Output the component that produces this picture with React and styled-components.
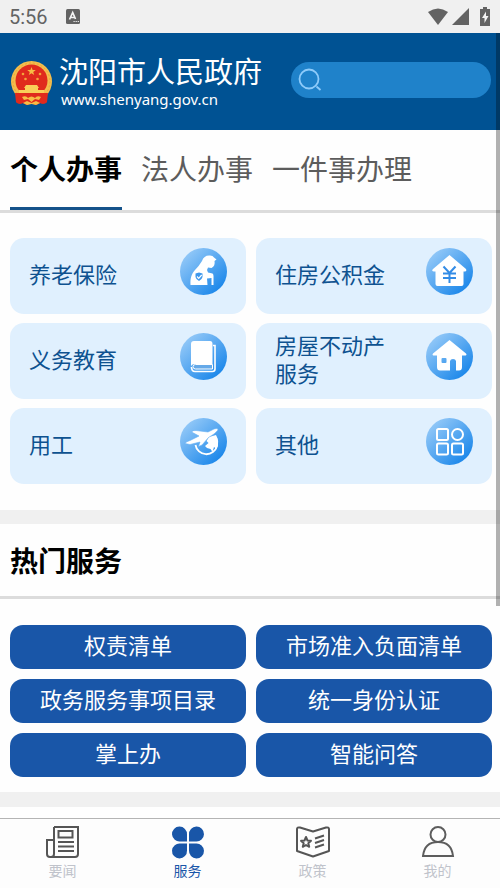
import React from "react";
import styled, { createGlobalStyle } from "styled-components";

const GlobalStyle = createGlobalStyle`
  *, *::before, *::after { box-sizing: border-box; }
  body {
    margin: 0;
    background: #fefefe;
    color: #000;
    font-family: Roboto, "Noto Sans CJK SC", sans-serif;
  }
  button, input { font: inherit; }
  button { border: 0; padding: 0; background: none; cursor: pointer; }
  a { text-decoration: none; color: inherit; }
  svg { display: block; flex: none; }
`;

const Page = styled.div`
  position: relative;
  display: flex;
  flex-direction: column;
  min-height: 100vh;
`;

const StatusBar = styled.div`
  display: flex;
  align-items: center;
  gap: 18px;
  height: 33px;
  padding: 0 9px;
  background: #f0f0f0;
  color: #636363;
  font-size: 20px;
  line-height: 34px;
`;

const StatusIcons = styled.div`
  display: flex;
  align-items: center;
  gap: 4px;
  margin-left: auto;
`;

const Header = styled.header`
  display: flex;
  align-items: center;
  justify-content: space-between;
  gap: 20px;
  height: 97px;
  padding: 0 9px 4px 10px;
  background: #005293;
`;

const Brand = styled.a`
  display: flex;
  align-items: center;
  gap: 6px;
  padding-top: 6px;
  color: #fff;
  white-space: nowrap;
`;

const BrandText = styled.span`
  display: flex;
  flex-direction: column;
`;

const BrandName = styled.span`
  font-size: 29px;
  line-height: 32px;
`;

const BrandUrl = styled.span`
  padding-left: 2px;
  font-family: "Noto Sans", sans-serif;
  font-size: 15px;
  line-height: 20px;
`;

const SearchBox = styled.label`
  display: flex;
  align-items: center;
  flex: 0 1 200px;
  min-width: 0;
  height: 36px;
  padding: 0 14px 0 7px;
  border-radius: 18px;
  background: #1f82ca;
`;

const SearchInput = styled.input`
  flex: 1;
  min-width: 0;
  margin-left: 8px;
  border: 0;
  outline: 0;
  background: transparent;
  color: #fff;
  font-size: 16px;
`;

const ScrollThumb = styled.div`
  position: absolute;
  top: 33px;
  right: 0;
  width: 4px;
  height: 573px;
  background: rgba(0, 0, 0, 0.3);
`;

const Main = styled.main`
  flex: 1;
`;

const TabList = styled.div`
  display: flex;
  gap: 19px;
  height: 83px;
  padding: 0 10px;
  border-bottom: 3px solid #dcdcdc;
`;

const Tab = styled.button`
  height: 80px;
  border-bottom: 3px solid ${(p) => (p.$active ? "#14528a" : "transparent")};
  color: ${(p) => (p.$active ? "#000" : "#5c5c5c")};
  font-size: 28px;
  font-weight: ${(p) => (p.$active ? 700 : 400)};
  padding-top: 4px;
  line-height: 72px;
  white-space: nowrap;
`;

const CardGrid = styled.div`
  display: grid;
  grid-template-columns: 1fr 1fr;
  gap: 9px 10px;
  padding: 25px 8px 26px 10px;
`;

const Card = styled.a`
  display: flex;
  align-items: center;
  justify-content: space-between;
  gap: 24px;
  min-height: 76px;
  padding: 10px 19px;
  border-radius: 14px;
  background: #e0f0fe;
  color: #0e5290;
  font-size: 22px;
  line-height: 28px;

  svg { align-self: flex-start; }
`;

const Divider = styled.div`
  height: ${(p) => p.$height || 14}px;
  background: #f0f0f0;
`;

const SectionTitle = styled.h2`
  margin: 0;
  padding: 0 10px;
  height: 75px;
  border-bottom: 3px solid #dcdcdc;
  font-size: 28px;
  font-weight: 700;
  line-height: 78px;
`;

const ServiceGrid = styled.div`
  display: grid;
  grid-template-columns: 1fr 1fr;
  gap: 10px;
  padding: 26px 8px 15px 10px;
`;

const ServiceButton = styled.button`
  min-height: 44px;
  border-radius: 13px;
  background: #1956a8;
  color: #fff;
  font-size: 22px;
  line-height: 44px;
`;

const NavBar = styled.nav`
  display: grid;
  grid-template-columns: repeat(4, 1fr);
  height: 70px;
  border-top: 1px solid #b4b4b4;
  background: #fdfdfd;
`;

const NavItem = styled.a`
  display: flex;
  flex-direction: column;
  align-items: center;
  padding-top: 6px;
  color: ${(p) => (p.$active ? "#1956a8" : "#c0c3cb")};
  font-size: 14px;
  line-height: 24px;
`;

function Emblem() {
  return (
    <svg width="43" height="46" viewBox="0 0 43 46" aria-hidden="true">
      <path d="M6 33 L6 42 Q8 45 13 43 L17 45 L21.500 43 L26 45 L30 43 Q35 45 37 42 L37 33Z" fill="#dd2a1d" />
      <circle cx="21.500" cy="21.500" r="20.500" fill="#f4bd4c" />
      <circle cx="21.500" cy="21.500" r="18.500" fill="none" stroke="#e9a53d" strokeWidth="1" strokeDasharray="2 2" />
      <circle cx="21.500" cy="20.500" r="16" fill="#e02a1d" />
      <path d="M21.500 7l1.100 3h3.200l-2.600 2 1 3-2.700-1.800-2.700 1.800 1-3-2.600-2h3.200z" fill="#f7bd45" />
      <g fill="#f2a53a">
        <circle cx="13" cy="14" r="1.300" /><circle cx="30" cy="14" r="1.300" />
        <circle cx="15.500" cy="19" r="1.300" /><circle cx="27.500" cy="19" r="1.300" />
      </g>
      <path d="M16 25h11l2 3H14zM15 28h13v2h6v3H9v-3h6z" fill="#f9cf59" />
      <path d="M5 33h33l-1 9q-3 3-7 1l-4 2-4.500-2-4.500 2-4-2q-4 2-7-1z" fill="#e02a1d" />
      <path d="M12 37q4-2 6 1 3.500-3 7 0 2-3 6-1l-2 3-4-1-3.500 3-3.500-3-4 1z" fill="#f6bd46" />
      <path d="M13 43l4-2 4.500 2 4.500-2 4 2-4 2-4.500-1-4.500 1z" fill="#f6bd46" />
    </svg>
  );
}

function Disc({ id, children }) {
  return (
    <svg width="47" height="47" viewBox="0 0 47 47" aria-hidden="true">
      <defs>
        <linearGradient id={id} x1="0.1" y1="0.1" x2="0.85" y2="0.9">
          <stop offset="0" stopColor="#96caf8" />
          <stop offset="1" stopColor="#1b87ea" />
        </linearGradient>
      </defs>
      <circle cx="23.500" cy="23.500" r="23.500" fill={`url(#${id})`} />
      {children}
    </svg>
  );
}

const ElderIcon = () => (
  <Disc id="disc-elder">
    <path d="M22 13Q24 7 30 7.500Q33 7.500 34 9.500L36.500 11.500L34.500 13Q35.500 18 31.500 20L28 19.500L27 22L28 24.500L32.500 25.500Q33.500 26 33.500 28V37H31.500V30L27 30.500L27.500 37H10.500C10 30 11.500 26 15 22Q19 18 22 13Z" fill="#fff" />
    <path d="M15.500 25.500l3.500-1 3.500 1v3.500q-.5 2.500-3.500 4-3-1.500-3.500-4z" fill="#3e98ed" />
    <path d="M17 28.500l1.700 1.800 3-3.300" fill="none" stroke="#fff" strokeWidth="1.200" />
  </Disc>
);

const FundIcon = () => (
  <Disc id="disc-fund">
    <path d="M23.500 7L40 21Q41 23 39 23.500H37.500V36Q37.500 38 35.500 38H11.500Q9.500 38 9.500 36V23.500H8Q5 23 7 21Z" fill="#fff" />
    <path d="M17.500 18.500l6 6.500 6-6.500M17 25.500h13M17 30h13M23.500 25v10" fill="none" stroke="#338ce6" strokeWidth="2" />
  </Disc>
);

const BookIcon = () => (
  <Disc id="disc-book">
    <path d="M11 11Q11 8 14 8H30Q32.500 8 32.500 11V31H15Q12 31 11 33Z" fill="#fff" />
    <path d="M33 12.500H35V36Q35 38.500 32.500 38.500H15Q11.500 38.500 11.500 34" fill="none" stroke="#fff" strokeWidth="1.600" />
    <path d="M32.500 31.500H15.500Q13 31.500 13 33.700T15.500 36H32.500Z" fill="#65a9e8" stroke="#fff" strokeWidth="1" />
  </Disc>
);

const HomeIcon = () => (
  <Disc id="disc-home">
    <path fillRule="evenodd" d="M23.500 7L40 20.500Q41.500 22.500 38.500 22.500H36V34Q36 37.500 33 37.500H30V28Q29.500 26 27 26T24 28V37.500H14Q11 37.500 11 34V22.500H8.500Q5.500 22.500 7 20.500ZM16.500 25Q15.500 25 15.500 26V29Q15.500 30 16.500 30H19.500Q20.500 30 20.500 29V26Q20.500 25 19.500 25Z" fill="#fff" />
  </Disc>
);

const WorkIcon = () => (
  <Disc id="disc-work">
    <path d="M15.500 27A11 11 0 0 0 37 28Q38 23 36 19" fill="none" stroke="#fff" strokeWidth="1.800" />
    <path d="M29 19L36 17Q39.500 24 36.500 31L34 29L32.500 34L30.500 31L27 30L25 28L28.500 25L26.500 23Z" fill="#fff" />
    <path d="M5 25.500Q6 23.500 10 22.500L19 18L11.500 14Q13 12 16 12.500L28 14L34 11Q39 9.500 37.500 12.500Q35 16 28.500 19.500L22 27L18.500 28.500L20 24L10 26.500Z" fill="#fff" stroke="#67b0f4" strokeWidth="0.6" />
  </Disc>
);

const OtherIcon = () => (
  <Disc id="disc-other">
    <g fill="none" stroke="#fff" strokeWidth="2">
      <rect x="11" y="11" width="11" height="11" rx="1.500" />
      <circle cx="31.500" cy="16.500" r="5.500" />
      <rect x="11" y="25.500" width="11" height="11" rx="1.500" />
      <rect x="26" y="25.500" width="11" height="11" rx="1.500" />
    </g>
  </Disc>
);

const NewsIcon = () => (
  <svg width="34" height="34" viewBox="0 0 34 34" fill="none" stroke="#555" strokeWidth="2" aria-hidden="true">
    <path d="M8 2H32V29Q32 32 29 32H4Q1 32 1 29V15H8M8 2V29Q8 32 5 32" />
    <rect x="12.500" y="6" width="14" height="6.500" />
    <path d="M12 17H28M12 21.500H28M12 26H28" />
  </svg>
);

const ServiceIcon = () => (
  <svg width="34" height="34" viewBox="0 0 34 34" fill="#1956a8" aria-hidden="true">
    <path d="M16 16.500H9.500A7.500 7.500 0 1 1 16 9.500ZM18 16.500V9.500A7.500 7.500 0 1 1 25 16.500ZM16 18.500V25.500A7.500 7.500 0 1 1 9.500 18.500ZM18 18.500H25A7.500 7.500 0 1 1 18 25.500Z" />
  </svg>
);

const PolicyIcon = () => (
  <svg width="34" height="34" viewBox="0 0 34 34" fill="none" stroke="#555" strokeWidth="2" strokeLinejoin="round" aria-hidden="true">
    <path d="M1 4Q1 2 4 2.500L17 6.500L30 2.500Q33 2 33 4V26L17 31.500L1 26Z" />
    <path d="M10 12l1.500 3.500 3.500.3-2.700 2.400.9 3.600L10 20l-3.200 1.800.9-3.600L5 15.800l3.500-.3z" />
    <path d="M19 13.500L28 10.500M19 18L28 15M19 22.500L28 19.500" />
  </svg>
);

const ProfileIcon = () => (
  <svg width="34" height="34" viewBox="0 0 34 34" fill="none" stroke="#5d5d5d" strokeWidth="2" aria-hidden="true">
    <circle cx="17" cy="9.500" r="7.500" />
    <path d="M2 31Q3.500 17 17 17T32 31Z" />
  </svg>
);

const tabs = ["个人办事", "法人办事", "一件事办理"];

const cards = [
  { label: "养老保险", Icon: ElderIcon },
  { label: "住房公积金", Icon: FundIcon },
  { label: "义务教育", Icon: BookIcon },
  { label: "房屋不动产服务", Icon: HomeIcon },
  { label: "用工", Icon: WorkIcon },
  { label: "其他", Icon: OtherIcon },
];

const services = ["权责清单", "市场准入负面清单", "政务服务事项目录", "统一身份认证", "掌上办", "智能问答"];

const navItems = [
  { label: "要闻", Icon: NewsIcon },
  { label: "服务", Icon: ServiceIcon, active: true },
  { label: "政策", Icon: PolicyIcon },
  { label: "我的", Icon: ProfileIcon },
];

export default function App() {
  return (
    <Page>
      <GlobalStyle />
      <StatusBar>
        <span>5:56</span>
        <svg width="14" height="15" viewBox="0 0 14 15" aria-hidden="true">
          <rect width="14" height="15" rx="1.500" fill="#636363" />
          <path d="M3.500 10.500L6.700 3.500L9.500 10M4.700 8.500H8.500" stroke="#f4f4f4" strokeWidth="1.700" fill="none" />
          <path d="M7.500 12.500h1.200M9.600 12.500h1.200M11.700 12.500h1.200" stroke="#f4f4f4" strokeWidth="1.200" />
        </svg>
        <StatusIcons>
          <svg width="20" height="18" viewBox="0 0 20 18" fill="#636363" aria-hidden="true">
            <path d="M0 4Q10-3 20 4L10 17Z" />
          </svg>
          <svg width="17" height="18" viewBox="0 0 17 18" fill="#636363" aria-hidden="true">
            <path d="M17 0V17H0Z" />
          </svg>
          <svg width="18" height="19" viewBox="0 0 18 19" aria-hidden="true">
            <path d="M10 0h4v2h3v17H7V2h3z" fill="#636363" />
            <path d="M13 4.500L9 11h2.500v5L15.500 9H13z" fill="#f4f4f4" />
          </svg>
        </StatusIcons>
      </StatusBar>
      <Header>
        <Brand href="#home">
          <Emblem />
          <BrandText>
            <BrandName>沈阳市人民政府</BrandName>
            <BrandUrl>www.shenyang.gov.cn</BrandUrl>
          </BrandText>
        </Brand>
        <SearchBox>
          <svg width="24" height="24" viewBox="0 0 24 24" fill="none" stroke="#8ecbfa" strokeWidth="1.800" aria-hidden="true">
            <circle cx="11" cy="11" r="9.500" />
            <path d="M18.500 18.500L22.500 22" />
          </svg>
          <SearchInput type="search" aria-label="搜索" />
        </SearchBox>
      </Header>
      <Main>
        <TabList role="tablist">
          {tabs.map((label, i) => (
            <Tab key={label} role="tab" aria-selected={i === 0} $active={i === 0}>{label}</Tab>
          ))}
        </TabList>
        <CardGrid>
          {cards.map(({ label, Icon }) => (
            <Card key={label} href="#service">
              <span>{label}</span>
              <Icon />
            </Card>
          ))}
        </CardGrid>
        <Divider />
        <SectionTitle>热门服务</SectionTitle>
        <ServiceGrid>
          {services.map((label) => (
            <ServiceButton key={label}>{label}</ServiceButton>
          ))}
        </ServiceGrid>
        <Divider $height={15} />
      </Main>
      <NavBar>
        {navItems.map(({ label, Icon, active }) => (
          <NavItem key={label} href="#nav" $active={active} aria-current={active ? "page" : undefined}>
            <Icon />
            <span>{label}</span>
          </NavItem>
        ))}
      </NavBar>
      <ScrollThumb />
    </Page>
  );
}
